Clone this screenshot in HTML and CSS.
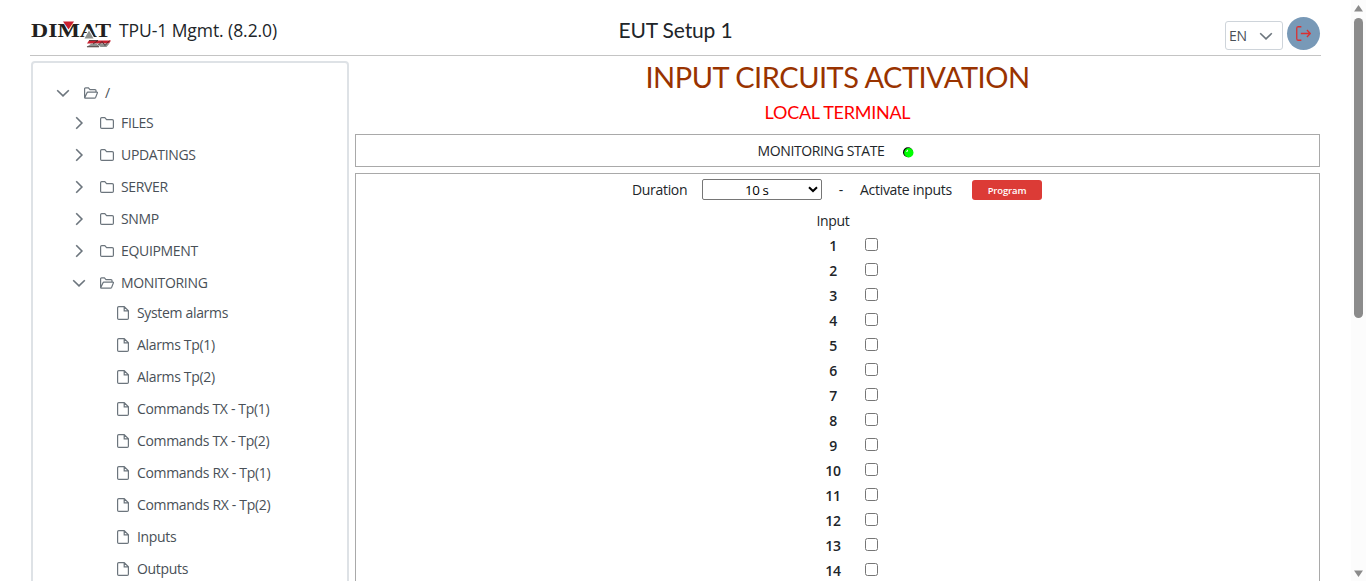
FILE: index.html
```html
<!DOCTYPE html>
<html lang="en">
<head>
<meta charset="utf-8">
<title>TPU-1 Mgmt.</title>
<link rel="stylesheet" href="styles.css">
</head>
<body>
<svg class="defs" aria-hidden="true">
  <symbol id="down" viewBox="0 0 14 14"><path d="M1.2 4.2 7 9.9l5.8-5.7"/></symbol>
  <symbol id="right" viewBox="0 0 14 14"><path d="M4.2 1.2 9.9 7l-5.7 5.8"/></symbol>
  <symbol id="folder" viewBox="0 0 14 14"><path d="M.6 11.2V2.8q0-1.2 1.2-1.2h3l1.8 2h5.600q1.200 0 1.200 1.200v6.400q0 1.200-1.200 1.200H1.800Q.6 12.400.6 11.200z"/></symbol>
  <symbol id="open" viewBox="0 0 14 14"><path d="M.6 11.400V2.800q0-1 1-1h2.800l1.600 1.800h5q1 0 1 1v1.600M.7 11.800l2.200-4.900q.3-.7 1-.7h9q.8 0 .5.700l-1.700 4.300q-.4.900-1.200.900H1.200q-.6 0-.5-.3z"/></symbol>
  <symbol id="file" viewBox="0 0 14 14"><path d="M8.200.6H2.800q-1.200 0-1.200 1.200v10.400q0 1.200 1.200 1.200h8.400q1.200 0 1.200-1.200V4.800L8.200.6v4.200h4.200"/></symbol>
</svg>
<div class="shell">
  <div class="page">
    <header class="top">
      <div class="brand">
        <svg class="logo" viewBox="0 0 82 28">
          <text class="logo-name" x="1" y="17" textLength="80" lengthAdjust="spacingAndGlyphs">DIMAT</text>
          <path class="logo-red" d="M33 1.500h11l-5.500 8z"/>
          <path class="logo-halo" d="M59 8.500 65 19H53z"/>
          <path class="logo-grey" d="M59 10.500 63.500 18.500h-9z"/>
          <path class="logo-red" d="M59 20.500h22l-2 3H57z"/>
          <path class="logo-grey" d="M56.500 27l5-3.500h5l3 3.500zM67 23.500h12.500l-3 3.500h-6z"/>
          <path class="logo-dark" d="M59 20.500h9l-5 3.500M68 25.500l4-4 3 4 4.500-5M57 26.800h12"/>
        </svg>
        <span class="product">TPU-1 Mgmt. (8.2.0)</span>
      </div>
      <div class="setup">EUT Setup 1</div>
      <div class="tools">
        <div class="lang"><span>EN</span><svg class="ico chev"><use href="#down"/></svg></div>
        <div class="logout"><svg viewBox="0 0 14 14"><path d="M5 .7H2.200Q.7.700.7 2.200v9.600q0 1.500 1.500 1.500H5M4.500 7h8.800M10.200 3.800 13.300 7l-3.100 3.200"/></svg></div>
      </div>
    </header>
    <div class="body">
      <nav class="tree">
        <div class="row root"><svg class="ico chev"><use href="#down"/></svg><svg class="ico"><use href="#open"/></svg><span>/</span></div>
        <div class="row"><svg class="ico chev"><use href="#right"/></svg><svg class="ico"><use href="#folder"/></svg><span>FILES</span></div>
        <div class="row"><svg class="ico chev"><use href="#right"/></svg><svg class="ico"><use href="#folder"/></svg><span>UPDATINGS</span></div>
        <div class="row"><svg class="ico chev"><use href="#right"/></svg><svg class="ico"><use href="#folder"/></svg><span>SERVER</span></div>
        <div class="row"><svg class="ico chev"><use href="#right"/></svg><svg class="ico"><use href="#folder"/></svg><span>SNMP</span></div>
        <div class="row"><svg class="ico chev"><use href="#right"/></svg><svg class="ico"><use href="#folder"/></svg><span>EQUIPMENT</span></div>
        <div class="row opened"><svg class="ico chev"><use href="#down"/></svg><svg class="ico"><use href="#open"/></svg><span>MONITORING</span></div>
        <div class="row leaf"><svg class="ico"><use href="#file"/></svg><span>System alarms</span></div>
        <div class="row leaf"><svg class="ico"><use href="#file"/></svg><span>Alarms Tp(1)</span></div>
        <div class="row leaf"><svg class="ico"><use href="#file"/></svg><span>Alarms Tp(2)</span></div>
        <div class="row leaf"><svg class="ico"><use href="#file"/></svg><span>Commands TX - Tp(1)</span></div>
        <div class="row leaf"><svg class="ico"><use href="#file"/></svg><span>Commands TX - Tp(2)</span></div>
        <div class="row leaf"><svg class="ico"><use href="#file"/></svg><span>Commands RX - Tp(1)</span></div>
        <div class="row leaf"><svg class="ico"><use href="#file"/></svg><span>Commands RX - Tp(2)</span></div>
        <div class="row leaf"><svg class="ico"><use href="#file"/></svg><span>Inputs</span></div>
        <div class="row leaf"><svg class="ico"><use href="#file"/></svg><span>Outputs</span></div>
      </nav>
      <main class="main">
        <h1>INPUT CIRCUITS ACTIVATION</h1>
        <h2>LOCAL TERMINAL</h2>
        <div class="state"><span>MONITORING STATE</span>
          <svg class="led" viewBox="0 0 11 11"><circle class="led-rim" cx="5" cy="5.300" r="5"/><circle class="led-face" cx="5.800" cy="5.800" r="4.700"/><path class="led-shine" d="M3 4.500 5 2.500v1.500L4 5z"/></svg>
        </div>
        <div class="panel">
          <div class="controls">
            <span class="duration">Duration</span>
            <div class="select"><span>10 s</span><svg viewBox="0 0 10 7"><path d="M1 1.200 5 5l4-3.800"/></svg></div>
            <span class="dash">-</span>
            <span class="activate">Activate inputs</span>
            <button class="program">Program</button>
          </div>
          <div class="inputs">
            <div class="caption">Input</div>
            <label><b>1</b><i></i></label>
            <label><b>2</b><i></i></label>
            <label><b>3</b><i></i></label>
            <label><b>4</b><i></i></label>
            <label><b>5</b><i></i></label>
            <label><b>6</b><i></i></label>
            <label><b>7</b><i></i></label>
            <label><b>8</b><i></i></label>
            <label><b>9</b><i></i></label>
            <label><b>10</b><i></i></label>
            <label><b>11</b><i></i></label>
            <label><b>12</b><i></i></label>
            <label><b>13</b><i></i></label>
            <label><b>14</b><i></i></label>
          </div>
        </div>
      </main>
    </div>
  </div>
  <div class="scroll">
    <svg class="arrow" viewBox="0 0 9 7"><path d="M4.500 0 9 6.500H0z"/></svg>
    <div class="thumb"></div>
    <svg class="arrow end" viewBox="0 0 9 7"><path d="M0 .500h9L4.500 7z"/></svg>
  </div>
</div>
</body>
</html>
```

FILE: styles.css
```css
* { box-sizing: border-box; }
body { margin: 0; background: #fff; color: #212529; font: 14px/20px "Open Sans", "Noto Sans", sans-serif; overflow: hidden; }
svg { display: block; fill: none; flex: none; }
.defs { position: absolute; width: 0; height: 0; }
.shell { display: flex; height: 581px; overflow: hidden; }
.page { flex: 1; padding: 0 30px; min-width: 0; }

.top { display: grid; grid-template-columns: 1fr auto 1fr; height: 56px; border-bottom: 1px solid #c4c4c4; }
.brand { display: flex; align-items: flex-start; padding-top: 20px; }
.logo { width: 82px; height: 28px; }
.logo-name { font: bold 19.500px "Liberation Serif", serif; fill: #231f20; }
.logo-red { fill: #c9202f; }
.logo-halo { fill: #fff; }
.logo-grey { fill: #8f928f; }
.logo-dark { stroke: #40282a; stroke-width: .8; }
.product { margin: -1px 0 0 7px; line-height: 22px; font-size: 17.500px; letter-spacing: -.07px; }
.setup { padding-top: 17px; font: 21px/25px Lato, sans-serif; letter-spacing: -.15px; }
.tools { display: flex; justify-content: flex-end; gap: 4px; padding: 17px 1px 0 0; }
.lang { display: flex; justify-content: space-between; align-items: center; width: 58px; height: 29px; margin-top: 4px; padding: 0 9px 0 3px; border: 1px solid #ced4da; border-radius: 3px; color: #495057; letter-spacing: -.4px; }
.logout { display: grid; place-items: center; width: 33px; height: 33px; border-radius: 50%; background: #7899b7; }
.logout svg { width: 15px; height: 15px; margin-top: -1px; stroke: #dc3030; stroke-width: 1.200; }

.body { display: flex; gap: 6px; padding: 5px 1px 0; height: 525px; }
.tree { width: 318px; height: 600px; border: 2px solid #dee2e6; border-radius: 4px; padding: 14px 0 0 39px; color: #495057; }
.ico { width: 14px; height: 14px; stroke: #6c757d; stroke-width: 1.200; }
.chev { stroke-width: 1.600; }
.row { display: flex; align-items: center; height: 32px; }
.row .ico + .ico { margin-left: 14px; }
.row span { margin-left: 7px; letter-spacing: -.33px; }
.root { margin: 0 0 -2px -16px; }
.opened { margin-bottom: -2px; }
.leaf { padding-left: 44px; }
.leaf .ico { stroke-width: 1.200; }

.main { flex: 1; min-width: 0; }
h1, h2 { margin: 0; font-family: Lato, sans-serif; font-weight: 400; text-align: center; }
h1 { margin-top: -1px; font-size: 29px; line-height: 34px; letter-spacing: -.48px; color: #993300; }
h2 { margin-top: 7px; font-size: 18px; line-height: 22px; letter-spacing: -.25px; color: #f00; }
.state { display: flex; align-items: center; justify-content: center; gap: 19px; height: 33px; margin-top: 11px; padding-right: 3px; border: 1px solid #a9a9a9; letter-spacing: -.4px; }
.led { width: 11px; height: 11px; margin-top: 3px; }
.led-rim { fill: #000; }
.led-face { fill: #0f0; }
.led-shine { fill: #fff; }
.panel { height: 600px; margin-top: 6px; border: 1px solid #a9a9a9; }
.controls { display: flex; align-items: center; height: 22px; margin: 5px 0 0 276px; }
.duration { width: 70px; letter-spacing: -.32px; }
.select { display: flex; align-items: center; width: 120px; height: 21px; margin-top: -1px; padding: 0 3px 0 42px; border: 1px solid #767676; border-radius: 2px; color: #000; justify-content: space-between; font-size: 13.300px; letter-spacing: -.35px; }
.select svg { width: 10px; height: 7px; stroke: #000; stroke-width: 2; }
.dash { width: 38px; text-align: center; }
.activate { width: 112px; letter-spacing: -.3px; }
.program { width: 70px; height: 20px; padding: 0; border: 0; border-radius: 3px; background: #dc3b36; color: #fff; font: 600 9.500px "Open Sans", sans-serif; letter-spacing: -.15px; }
.inputs { width: 80px; margin-left: 446px; padding-top: 9px; }
.caption { position: relative; top: 1px; width: 62px; text-align: center; height: 23px; letter-spacing: -.3px; }
.inputs label { display: flex; height: 25px; align-items: center; }
.inputs b { width: 62px; text-align: center; font-weight: 600; letter-spacing: -.3px; }
.inputs i { width: 13px; height: 13px; margin: -3px 0 0 1px; border: 1px solid #767676; border-radius: 2.500px; }

.scroll { width: 15px; padding: 5px 3px 0; background: #fcfcfc; display: flex; flex-direction: column; }
.arrow { width: 9px; height: 7px; fill: #8b8b8b; }
.thumb { width: 9px; height: 300px; margin-top: 6px; border-radius: 5px; background: #8b8b8b; }
.end { margin: auto 0 4px; }
```
